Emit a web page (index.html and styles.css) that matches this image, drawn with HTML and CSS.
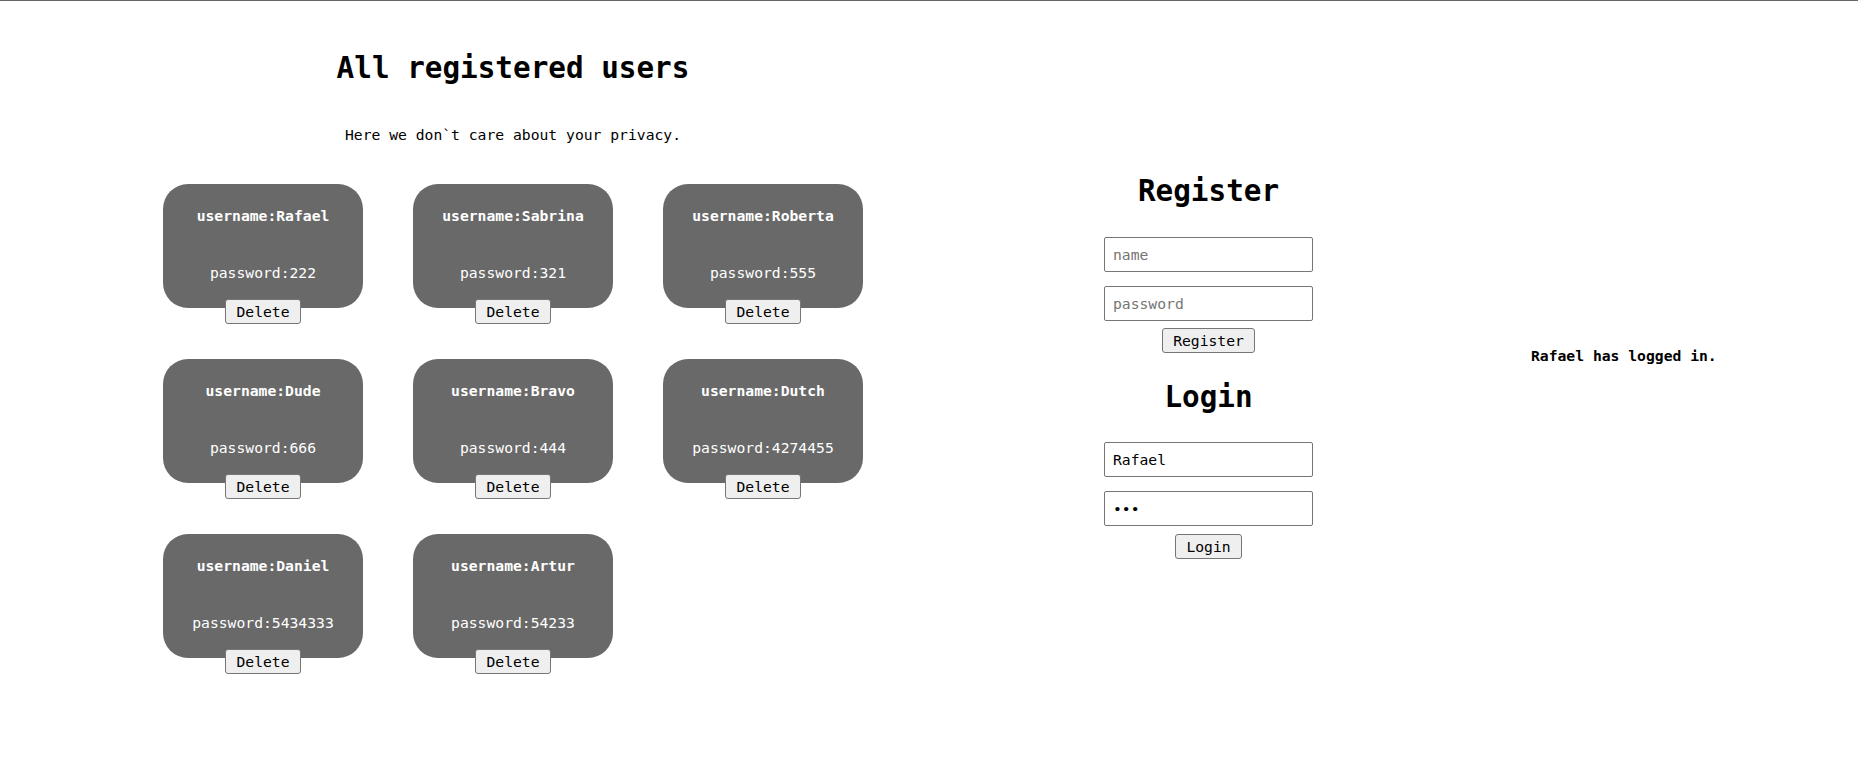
FILE: index.html
```html
<!DOCTYPE html>
<html>
<head>
<meta charset="utf-8">
<link rel="stylesheet" href="styles.css">
</head>
<body>
<div class="page">
  <section class="users">
    <h1 class="title">All registered users</h1>
    <p class="subtitle">Here we don`t care about your privacy.</p>
    <div class="grid">
      <div class="user"><div class="card"><div class="uname">username:Rafael</div><div class="upass">password:222</div></div><button class="btn">Delete</button></div>
      <div class="user"><div class="card"><div class="uname">username:Sabrina</div><div class="upass">password:321</div></div><button class="btn">Delete</button></div>
      <div class="user"><div class="card"><div class="uname">username:Roberta</div><div class="upass">password:555</div></div><button class="btn">Delete</button></div>
      <div class="user"><div class="card"><div class="uname">username:Dude</div><div class="upass">password:666</div></div><button class="btn">Delete</button></div>
      <div class="user"><div class="card"><div class="uname">username:Bravo</div><div class="upass">password:444</div></div><button class="btn">Delete</button></div>
      <div class="user"><div class="card"><div class="uname">username:Dutch</div><div class="upass">password:4274455</div></div><button class="btn">Delete</button></div>
      <div class="user"><div class="card"><div class="uname">username:Daniel</div><div class="upass">password:5434333</div></div><button class="btn">Delete</button></div>
      <div class="user"><div class="card"><div class="uname">username:Artur</div><div class="upass">password:54233</div></div><button class="btn">Delete</button></div>
    </div>
  </section>
  <section class="forms">
    <h1 class="title form-title">Register</h1>
    <input class="field" type="text" placeholder="name">
    <input class="field field-second" type="password" placeholder="password">
    <button class="btn btn-register">Register</button>
    <h1 class="title form-title login-title">Login</h1>
    <input class="field" type="text" value="Rafael">
    <input class="field field-second" type="password" value="abc">
    <button class="btn btn-login">Login</button>
  </section>
  <section class="status">
    <div class="status-text">Rafael has logged in.</div>
  </section>
</div>
</body>
</html>
```

FILE: styles.css
```css
html, body {
  margin: 0;
  padding: 0;
  background: #ffffff;
}

body {
  border-top: 1px solid #666666;
  font-family: "DejaVu Sans Mono", monospace;
  font-size: 14.7px;
  color: #000000;
}

.page {
  display: flex;
  align-items: flex-start;
}

.users {
  width: 750px;
  margin-left: 138px;
  display: flex;
  flex-direction: column;
  align-items: center;
}

.title {
  margin: 0;
  font-size: 29.3px;
  line-height: 36px;
  font-weight: bold;
}

.users .title {
  margin-top: 49px;
}

.subtitle {
  margin: 39px 0 0 0;
  line-height: 19px;
}

.grid {
  margin-top: 40px;
  display: grid;
  grid-template-columns: repeat(3, 200px);
  column-gap: 50px;
  row-gap: 35px;
}

.user {
  display: flex;
  flex-direction: column;
  align-items: center;
}

.card {
  box-sizing: border-box;
  width: 200px;
  height: 124px;
  padding-top: 22px;
  border-radius: 25px;
  background: #696969;
  color: #ffffff;
  text-align: center;
  line-height: 19px;
}

.uname {
  font-weight: bold;
}

.upass {
  margin-top: 38px;
}

.btn {
  font-family: "DejaVu Sans Mono", monospace;
  font-size: 14.7px;
  line-height: 19px;
  color: #000000;
  background: #efefef;
  border: 1px solid #767676;
  border-radius: 3px;
  padding: 2px 10px 2px 10px;
  margin: 0;
}

.user .btn {
  margin-top: -9px;
  position: relative;
}

.forms {
  width: 209px;
  margin-left: 216px;
  display: flex;
  flex-direction: column;
  align-items: center;
}

.form-title {
  margin-top: 172px;
}

.login-title {
  margin-top: 26px;
}

.field {
  box-sizing: border-box;
  width: 209px;
  height: 35px;
  margin: 28px 0 0 0;
  padding: 7px 8px;
  border: 1px solid #767676;
  border-radius: 2px;
  font-family: "DejaVu Sans Mono", monospace;
  font-size: 14.7px;
  line-height: 19px;
  color: #000000;
  background: #ffffff;
}

.login-title + .field {
  margin-top: 27px;
}

.field::placeholder {
  color: #757575;
}

.field-second {
  margin-top: 14px;
}

.btn-register {
  margin-top: 7px;
}

.btn-login {
  margin-top: 8px;
}

.status {
  margin-left: 218px;
  padding-top: 345px;
}

.status-text {
  font-weight: bold;
  line-height: 19px;
}
```
